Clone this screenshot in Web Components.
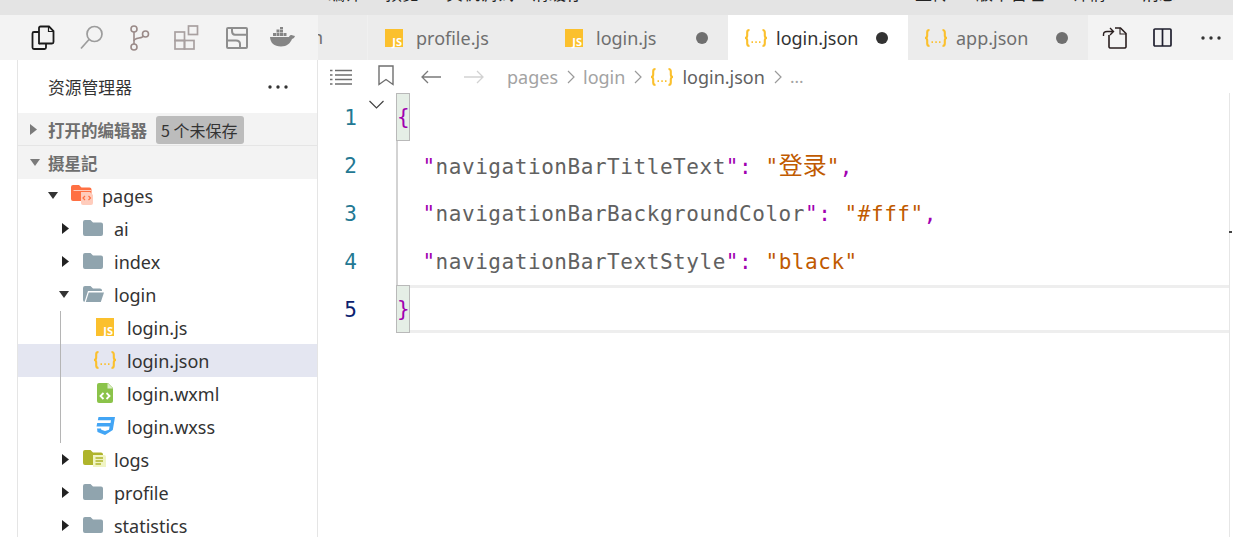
<!DOCTYPE html>
<html lang="zh">
<head>
<meta charset="utf-8">
<title>login.json</title>
<style>
  html, body { margin: 0; height: 100%; overflow: hidden; background: #fff; }
  body { font-family: "Noto Sans", "Noto Sans CJK SC", sans-serif; }
</style>
</head>
<body>
<ide-window></ide-window>
<script>
const ICONS = {
  files: `<svg width="24" height="26" viewBox="0 0 24 26" fill="none" stroke="#1b1b1b" stroke-width="1.8"><path d="M8 18.5V3a1.5 1.5 0 0 1 1.5-1.5H18l4.5 4.5v11a1.5 1.5 0 0 1-1.5 1.5H9.500A1.500 1.500 0 0 1 8 18.500Z"/><path d="M8 7H3a1.500 1.500 0 0 0-1.500 1.500v14A1.500 1.500 0 0 0 3 24h10.500a1.500 1.500 0 0 0 1.500-1.500V19"/><path d="M17.500 1.500V6.500H22.500" stroke-width="1.200"/></svg>`,
  search: `<svg width="24" height="25" viewBox="0 0 24 25" fill="none" stroke="#9c9c9c" stroke-width="1.700"><circle cx="14.500" cy="9" r="7.500"/><path d="M9 14.500 1 23.500"/></svg>`,
  git: `<svg width="20" height="26" viewBox="0 0 20 26" fill="none" stroke="#9a8a88" stroke-width="1.600"><circle cx="4" cy="4" r="3"/><circle cx="4" cy="22" r="3"/><circle cx="15.500" cy="9" r="3"/><path d="M4 7v12"/><path d="M4 16c0-4 8.500-2 9.500-5"/></svg>`,
  ext: `<svg width="25" height="25" viewBox="0 0 25 25" fill="none" stroke="#a8a0a0" stroke-width="1.700"><rect x="1" y="7" width="9.500" height="8.500"/><rect x="1" y="15.500" width="9.500" height="8.500"/><rect x="10.500" y="15.500" width="9.500" height="8.500"/><rect x="14.500" y="1" width="9" height="8.500"/></svg>`,
  box: `<svg width="22" height="22" viewBox="0 0 22 22" fill="none" stroke="#8e8e8e" stroke-width="2"><rect x="1" y="1" width="20" height="20" rx="1"/><path d="M6 1V4Q6 7.700 9 7.700H21"/><path d="M1 13.500H10Q14 13.500 14 17V21"/></svg>`,
  docker: `<svg width="25" height="19" viewBox="0 0 25 19" fill="#858585"><path d="M0 9h19c.5-1.500 1.500-2 2.500-2 .5 0 1 .2 1.500.5L25 8c-.5 1.500-1.500 2.500-3 3-1.500 4-5 7.500-11 7.500C4 18.500 .5 15 0 9Z"/><rect x="3" y="5" width="3" height="3"/><rect x="6.500" y="5" width="3" height="3"/><rect x="10" y="5" width="3" height="3"/><rect x="13.500" y="5" width="3" height="3"/><rect x="6.500" y="1.500" width="3" height="3"/><rect x="10" y="1.500" width="3" height="3"/><rect x="10" y="-1" width="3" height="2"/></svg>`,
  js: `<svg width="18" height="18" viewBox="0 0 18 18"><rect width="18" height="18" fill="#fbc02d"/><text x="17" y="16.500" text-anchor="end" font-family="Noto Sans, sans-serif" font-weight="700" font-size="11" fill="#fff">JS</text></svg>`,
  json: `<svg width="24" height="18" viewBox="0 0 24 18" fill="none" stroke="#fbc02d" stroke-width="2.100"><path d="M5.500 1C3.500 1 3.200 2 3.200 3.500v3C3.200 8 2.500 9 1 9c1.500 0 2.200 1 2.200 2.500v3C3.200 16 3.500 17 5.500 17"/><path d="M18.500 1c2 0 2.300 1 2.300 2.500v3C20.800 8 21.500 9 23 9c-1.500 0-2.200 1-2.200 2.500v3c0 1.500-.3 2.500-2.300 2.500"/><path d="M7.500 13.200h1.500M11.300 13.200h1.500M15 13.200h1.500" stroke-width="1.800"/></svg>`,
  wxml: `<svg width="16" height="20" viewBox="0 0 16 20"><path d="M2 0h9l5 5v13a2 2 0 0 1-2 2H2a2 2 0 0 1-2-2V2a2 2 0 0 1 2-2Z" fill="#8bc34a"/><path d="M10.500 0v5.500H16" fill="#dcedc8"/><path d="M6.500 10 3.500 13l3 3M9.500 10l3 3-3 3" fill="none" stroke="#fff" stroke-width="1.800"/></svg>`,
  css: `<svg width="20" height="18" viewBox="0 0 20 18" fill="#42a5f5"><path d="M3.500 0H20l-2.200 13L10 18l-7.500-3L2 11.500h4l.3 1.300L10 14l4-1.300.6-3.300H1.500l.7-3.500h13.300l.5-2.700H2.800Z"/></svg>`,
  folder: `<svg width="20" height="16" viewBox="0 0 20 16" fill="#90a4ae"><path d="M2 0h5.500l2.500 2.500h8a2 2 0 0 1 2 2V14a2 2 0 0 1-2 2H2a2 2 0 0 1-2-2V2a2 2 0 0 1 2-2Z"/></svg>`,
  open: `<svg width="21" height="16" viewBox="0 0 21 16" fill="#90a4ae"><path d="M2 0h5.500l2.500 2.500h7a2 2 0 0 1 2 2V5H5L1.500 16H2a2 2 0 0 1-2-2V2a2 2 0 0 1 2-2Z"/><path d="M5.800 6.500H21L17.800 16H2.800Z"/></svg>`,
  pages: `<svg width="22" height="20" viewBox="0 0 22 20"><path d="M2 0h6l2.500 2.500h8a2 2 0 0 1 2 2V14a2 2 0 0 1-2 2H2a2 2 0 0 1-2-2V2a2 2 0 0 1 2-2Z" fill="#ff7043"/><path d="M2.500 5.500H20" stroke="#ffccbc" stroke-width="1"/><path d="M10 7h9l3 3v8a2 2 0 0 1-2 2h-8a2 2 0 0 1-2-2Z" fill="#ffccbc"/><path d="M14 11l-2 2 2 2M17.500 11l2 2-2 2" fill="none" stroke="#ff7043" stroke-width="1.200"/></svg>`,
  logs: `<svg width="23" height="17" viewBox="0 0 23 17"><path d="M2 0h5.500L10 2.500h8a2 2 0 0 1 2 2V13a2 2 0 0 1-2 2H2a2 2 0 0 1-2-2V2a2 2 0 0 1 2-2Z" fill="#afb42b"/><path d="M10 5h11a2 2 0 0 1 2 2v10H10Z" fill="#f0f4c3"/><path d="M12.500 8H20M12.500 11H20M12.500 14H18" stroke="#afb42b" stroke-width="1.300"/></svg>`,
  list: `<svg width="22" height="16" viewBox="0 0 22 16" fill="none" stroke="#6f6f6f" stroke-width="1.300"><path d="M0 1.500h2.500M0 6h2.500M0 10.500h2.500M0 15h2.500"/><path d="M5 1.500h17M5 6h17M5 10.500h17M5 15h17"/></svg>`,
  bookmark: `<svg width="16" height="21" viewBox="0 0 16 21" fill="none" stroke="#6f6f6f" stroke-width="1.400"><path d="M1 1h14v18.500l-7-5-7 5Z"/></svg>`,
  back: `<svg width="20" height="14" viewBox="0 0 20 14" fill="none" stroke="#7a7a7a" stroke-width="1.300"><path d="M7 1 1 7l6 6M1 7h19"/></svg>`,
  forward: `<svg width="20" height="14" viewBox="0 0 20 14" fill="none" stroke="#d2d2d2" stroke-width="1.300"><path d="M13 1l6 6-6 6M19 7H0"/></svg>`,
  sep: `<svg width="8" height="14" viewBox="0 0 8 14" fill="none" stroke="#9a9a9a" stroke-width="1.200"><path d="M1 1l6 6-6 6"/></svg>`,
  fold: `<svg width="15" height="9" viewBox="0 0 15 9" fill="none" stroke="#424242" stroke-width="1.200"><path d="M.5 1l7 7 7-7"/></svg>`,
  changes: `<svg width="25" height="22" viewBox="0 0 25 22" fill="none" stroke="#2a1f1f" stroke-width="1.600"><path d="M7 8v12a1.500 1.500 0 0 0 1.500 1h14a1.500 1.500 0 0 0 1.500-1V6.500L18.500 1H13"/><path d="M18 1v6h6" stroke-width="1.100"/><path d="M1.500 9V7.500c0-2 1.500-3 3.500-3h6M8 1l3.500 3.500L8 8" stroke-width="1.400"/></svg>`,
  split: `<svg width="19" height="19" viewBox="0 0 19 19" fill="none" stroke="#1f1f2e" stroke-width="1.700"><rect x="1" y="1" width="17" height="17" rx="1"/><path d="M9.500 1v17"/></svg>`,
  more: `<svg width="20" height="4" viewBox="0 0 20 4" fill="#333"><circle cx="2" cy="2" r="1.700"/><circle cx="10" cy="2" r="1.700"/><circle cx="18" cy="2" r="1.700"/></svg>`,
  right: `<svg width="7" height="11" viewBox="0 0 7 11" fill="#222"><path d="M0 0l7 5.500L0 11Z"/></svg>`,
  down: `<svg width="10" height="7" viewBox="0 0 10 7" fill="#333"><path d="M0 0h10L5 7Z"/></svg>`,
  rightGrey: `<svg width="7" height="11" viewBox="0 0 7 11" fill="#7a7a7a"><path d="M0 0l7 5.500L0 11Z"/></svg>`,
  downGrey: `<svg width="10" height="7" viewBox="0 0 10 7" fill="#7a7a7a"><path d="M0 0h10L5 7Z"/></svg>`
};

class UiIcon extends HTMLElement {
  connectedCallback() {
    if (this.shadowRoot) return;
    this.attachShadow({ mode: 'open' });
    this.shadowRoot.innerHTML = `<style>:host { display: inline-flex; flex: none; line-height: 0; } svg { display: block; overflow: visible; }</style>${ICONS[this.getAttribute('name')] || ''}`;
  }
}
customElements.define('ui-icon', UiIcon);

// strip of the menu bar, only the feet of its labels stay in view
class TopStrip extends HTMLElement {
  constructor() {
    super();
    this.attachShadow({ mode: 'open' });
    const labels = [['编译', 328], ['预览', 23], ['真机调试', 27], ['清缓存', 18], ['上传', 332], ['版本管理', 27], ['详情', 28], ['消息', 36]];
    this.shadowRoot.innerHTML = `
      <style>
        :host { display: flex; height: 15px; background: #e4e4e4; overflow: hidden; flex: none; }
        span { font: 17px/20px "Noto Sans CJK SC", sans-serif; color: #222; margin-top: -17px; white-space: nowrap; }
      </style>
      ${labels.map(([t, m]) => `<span style="margin-left:${m}px">${t}</span>`).join('')}`;
  }
}
customElements.define('top-strip', TopStrip);

class EditorTab extends HTMLElement {
  constructor() {
    super();
    this.attachShadow({ mode: 'open' });
    this.shadowRoot.innerHTML = `
      <style>
        :host { display: flex; align-items: center; box-sizing: border-box; width: 180px; height: 45px; padding: 0 20px 0 17px; background: #ececec; color: #6f6f6f; font-size: 18px; }
        :host([active]) { background: #fff; color: #333; }
        .icon { width: 31px; display: flex; }
        .dot { display: none; width: 12px; height: 12px; border-radius: 50%; background: #6f6f6f; margin-left: auto; }
        :host([dirty]) .dot { display: block; }
        :host([active]) .dot { background: #333; }
        ::slotted(ui-icon[name=json]) { margin-left: -1px; }
      </style>
      <span class="icon"><slot name="icon"></slot></span><slot></slot><span class="dot"></span>`;
  }
}
customElements.define('editor-tab', EditorTab);

class TabStrip extends HTMLElement {
  constructor() {
    super();
    this.attachShadow({ mode: 'open' });
    this.shadowRoot.innerHTML = `
      <style>
        :host { display: flex; height: 45px; background: #f3f3f3; flex: none; overflow: hidden; }
        .activity { display: flex; align-items: center; width: 300px; margin-left: 18px; box-sizing: border-box; flex: none; }
        .stub { width: 50px; height: 45px; background: #ececec; flex: none; overflow: hidden; font-size: 18px; line-height: 45px; color: #6f6f6f; text-indent: -6px; white-space: nowrap; border-right: 1px solid #f0f0f0; box-sizing: border-box; }
        .actions { display: flex; align-items: center; flex: 1; }
        ui-icon[name=files] { margin-left: 13px; }
        ui-icon[name=search] { margin-left: 25px; }
        ui-icon[name=git] { margin-left: 26px; }
        ui-icon[name=ext] { margin-left: 24px; }
        ui-icon[name=box] { margin-left: 27px; }
        ui-icon[name=docker] { margin-left: 22px; }
        ui-icon[name=changes] { margin-left: 14px; }
        ui-icon[name=split] { margin-left: 26px; }
        ui-icon[name=more] { margin-left: 29px; }
      </style>
      <div class="activity">
        <ui-icon name="files"></ui-icon><ui-icon name="search"></ui-icon><ui-icon name="git"></ui-icon>
        <ui-icon name="ext"></ui-icon><ui-icon name="box"></ui-icon><ui-icon name="docker"></ui-icon>
      </div>
      <div class="stub">n</div>
      <slot></slot>
      <div class="actions"><ui-icon name="changes"></ui-icon><ui-icon name="split"></ui-icon><ui-icon name="more"></ui-icon></div>`;
  }
}
customElements.define('tab-strip', TabStrip);

class TreeRow extends HTMLElement {
  constructor() {
    super();
    this.attachShadow({ mode: 'open' });
  }
  connectedCallback() {
    const caret = this.getAttribute('caret');
    const icon = this.getAttribute('icon');
    const indent = this.getAttribute('indent') || 0;
    const iconW = this.getAttribute('icon-w') || 31;
    const caretW = this.getAttribute('caret-w') || 21;
    this.shadowRoot.innerHTML = `
      <style>
        :host { display: flex; align-items: center; height: 33px; font-size: 18px; color: #333; white-space: nowrap; }
        :host([selected]) { background: #e4e6f1; }
        .caret { display: flex; justify-content: flex-start; flex: none; }
        .icon { display: flex; flex: none; margin-top: -2px; }
      </style>
      <span style="width:${indent}px;flex:none"></span>
      <span class="caret" style="width:${caretW}px">${caret ? `<ui-icon name="${caret}"></ui-icon>` : ''}</span>
      <span class="icon" style="width:${iconW}px"><ui-icon name="${icon}"></ui-icon></span>
      <slot></slot>`;
  }
}
customElements.define('tree-row', TreeRow);

class SectionHeader extends HTMLElement {
  constructor() {
    super();
    this.attachShadow({ mode: 'open' });
  }
  connectedCallback() {
    const caret = this.getAttribute('caret');
    this.shadowRoot.innerHTML = `
      <style>
        :host { display: flex; flex: none; align-items: center; box-sizing: border-box; height: 33px; padding-left: 12px; background: #f3f3f3; color: #6f6f6f; font: 700 16.500px "Noto Sans CJK SC", sans-serif; white-space: nowrap; }
        :host([divided]) { border-bottom: 1px solid #e5e5e5; padding-top: 1px; }
        .caret { width: 18px; flex: none; display: flex; }
        .extra { margin-left: 9px; }
      </style>
      <span class="caret"><ui-icon name="${caret}"></ui-icon></span><slot></slot><span class="extra"><slot name="extra"></slot></span>`;
  }
}
customElements.define('section-header', SectionHeader);

class SideBar extends HTMLElement {
  constructor() {
    super();
    this.attachShadow({ mode: 'open' });
    this.shadowRoot.innerHTML = `
      <style>
        :host { display: flex; flex-direction: column; box-sizing: border-box; width: 301px; margin-left: 17px; flex: none; border-left: 1px solid #e5e5e5; border-right: 1px solid #e5e5e5; overflow: hidden; background: #fff; }
        .title { display: flex; align-items: center; justify-content: space-between; height: 53px; padding: 0 29px 0 30px; font: 16.800px "Noto Sans CJK SC", sans-serif; color: #333; flex: none; }
        .tree { position: relative; flex: 1; min-height: 0; }
        .guide { position: absolute; left: 42px; top: 132px; width: 1px; height: 132px; background: #b5b5b5; }
      </style>
      <div class="title"><span>资源管理器</span><ui-icon name="more"></ui-icon></div>
      <slot name="sections"></slot>
      <div class="tree"><slot></slot><div class="guide"></div></div>`;
  }
}
customElements.define('side-bar', SideBar);

class BreadCrumbs extends HTMLElement {
  constructor() {
    super();
    this.attachShadow({ mode: 'open' });
    this.shadowRoot.innerHTML = `
      <style>
        :host { display: flex; align-items: center; height: 33px; padding-left: 12px; flex: none; font-size: 18px; color: #a3a3a3; white-space: nowrap; }
        ui-icon[name=bookmark] { margin-left: 26px; margin-top: -2px; }
        ui-icon[name=back] { margin-left: 27px; }
        ui-icon[name=forward] { margin-left: 23px; }
        .pages { margin-left: 23px; }
        ui-icon[name=sep] { margin: 0 8px 0 9px; }
        ui-icon[name=json] { margin-right: 8px; }
        .file { color: #616161; }
        .rest { color: #a3a3a3; font-size: 17px; }
      </style>
      <ui-icon name="list"></ui-icon><ui-icon name="bookmark"></ui-icon><ui-icon name="back"></ui-icon><ui-icon name="forward"></ui-icon>
      <span class="pages">pages</span><ui-icon name="sep"></ui-icon><span>login</span><ui-icon name="sep"></ui-icon>
      <ui-icon name="json"></ui-icon><span class="file">login.json</span><ui-icon name="sep"></ui-icon><span class="rest">...</span>`;
  }
}
customElements.define('bread-crumbs', BreadCrumbs);

class CodeLine extends HTMLElement {
  constructor() {
    super();
    this.attachShadow({ mode: 'open' });
  }
  connectedCallback() {
    const n = this.getAttribute('n');
    const brace = this.getAttribute('brace');
    const fold = this.hasAttribute('fold');
    this.shadowRoot.innerHTML = `
      <style>
        :host { display: flex; height: 48px; font: 21px/50px "DejaVu Sans Mono", "Noto Sans CJK SC", monospace; letter-spacing: .55px; white-space: pre; color: #616161; }
        .num { width: 39px; text-align: right; color: #237893; flex: none; letter-spacing: 0; }
        :host([current]) .num { color: #0b216f; }
        .fold { width: 39px; flex: none; padding: 7px 0 0 12px; box-sizing: border-box; line-height: 0; }
        .brace { box-sizing: border-box; width: 14px; flex: none; background: #e5eee6; border: 1px solid #b9b9b9; color: #a000b0; line-height: 46px; letter-spacing: 0; }
        .text { flex: 1; box-sizing: border-box; text-indent: -2px; }
        :host([guide]) .text { border-left: 2px solid #d3d3d3; }
        :host([current]) .text { border-top: 3px solid #eee; border-bottom: 3px solid #eee; }
        ::slotted(.cjk) { font-size: 24px; letter-spacing: 0; }
      </style>
      <span class="num">${n}</span>
      <span class="fold">${fold ? '<ui-icon name="fold"></ui-icon>' : ''}</span>
      ${brace ? `<span class="brace">${brace}</span>` : ''}
      <span class="text"><slot></slot></span>`;
  }
}
customElements.define('code-line', CodeLine);

class CodeEditor extends HTMLElement {
  constructor() {
    super();
    this.attachShadow({ mode: 'open' });
    this.shadowRoot.innerHTML = `
      <style>
        :host { display: flex; flex-direction: column; flex: 1; min-width: 0; overflow: hidden; background: #fff; }
        .lines { position: relative; margin-right: 3px; border-right: 1px solid #e6e6e6; flex: 1; }
        .tick { position: absolute; right: -3px; top: 138px; width: 3px; height: 2px; background: #444; }
      </style>
      <bread-crumbs></bread-crumbs>
      <div class="lines"><slot></slot><div class="tick"></div></div>`;
  }
}
customElements.define('code-editor', CodeEditor);

class IdeWindow extends HTMLElement {
  constructor() {
    super();
    this.attachShadow({ mode: 'open' });
    this.shadowRoot.innerHTML = `
      <style>
        :host { display: flex; flex-direction: column; height: 537px; width: 1233px; overflow: hidden; font-family: "Noto Sans", "Noto Sans CJK SC", sans-serif; background: #fff; }
        .body { display: flex; flex: 1; min-height: 0; }
        .badge { display: inline-block; background: #bcbcbc; color: #333; border-radius: 3px; padding: 0 7px 0 5px; font-weight: 400; font-size: 16px; line-height: 28px; }
        .p { color: #a000b0; } .s { color: #c05a00; }
      </style>
      <top-strip></top-strip>
      <tab-strip>
        <editor-tab><ui-icon slot="icon" name="js"></ui-icon>profile.js</editor-tab>
        <editor-tab dirty><ui-icon slot="icon" name="js"></ui-icon>login.js</editor-tab>
        <editor-tab dirty active><ui-icon slot="icon" name="json"></ui-icon>login.json</editor-tab>
        <editor-tab dirty><ui-icon slot="icon" name="json"></ui-icon>app.json</editor-tab>
      </tab-strip>
      <div class="body">
        <side-bar>
          <section-header slot="sections" caret="rightGrey" divided>打开的编辑器<span slot="extra" class="badge">5 个未保存</span></section-header>
          <section-header slot="sections" caret="downGrey">摄星記</section-header>
          <tree-row indent="30" caret-w="23" caret="down" icon="pages">pages</tree-row>
          <tree-row indent="44" caret="right" icon="folder">ai</tree-row>
          <tree-row indent="44" caret="right" icon="folder">index</tree-row>
          <tree-row indent="41" caret-w="24" caret="down" icon="open">login</tree-row>
          <tree-row indent="57" icon="js">login.js</tree-row>
          <tree-row indent="54" icon="json" icon-w="34" selected>login.json</tree-row>
          <tree-row indent="58" icon="wxml" icon-w="30">login.wxml</tree-row>
          <tree-row indent="56" icon="css" icon-w="32">login.wxss</tree-row>
          <tree-row indent="44" caret="right" icon="logs">logs</tree-row>
          <tree-row indent="44" caret="right" icon="folder">profile</tree-row>
          <tree-row indent="44" caret="right" icon="folder">statistics</tree-row>
        </side-bar>
        <code-editor>
          <code-line n="1" fold brace="{"></code-line>
          <code-line n="2" guide>  <span class="p">"</span>navigationBarTitleText<span class="p">": </span><span class="s">"</span><span class="s cjk">登录</span><span class="s">"</span><span class="p">,</span></code-line>
          <code-line n="3" guide>  <span class="p">"</span>navigationBarBackgroundColor<span class="p">": </span><span class="s">"#fff"</span><span class="p">,</span></code-line>
          <code-line n="4" guide>  <span class="p">"</span>navigationBarTextStyle<span class="p">": </span><span class="s">"black"</span></code-line>
          <code-line n="5" current brace="}"></code-line>
        </code-editor>
      </div>`;
  }
}
customElements.define('ide-window', IdeWindow);
</script>
</body>
</html>
